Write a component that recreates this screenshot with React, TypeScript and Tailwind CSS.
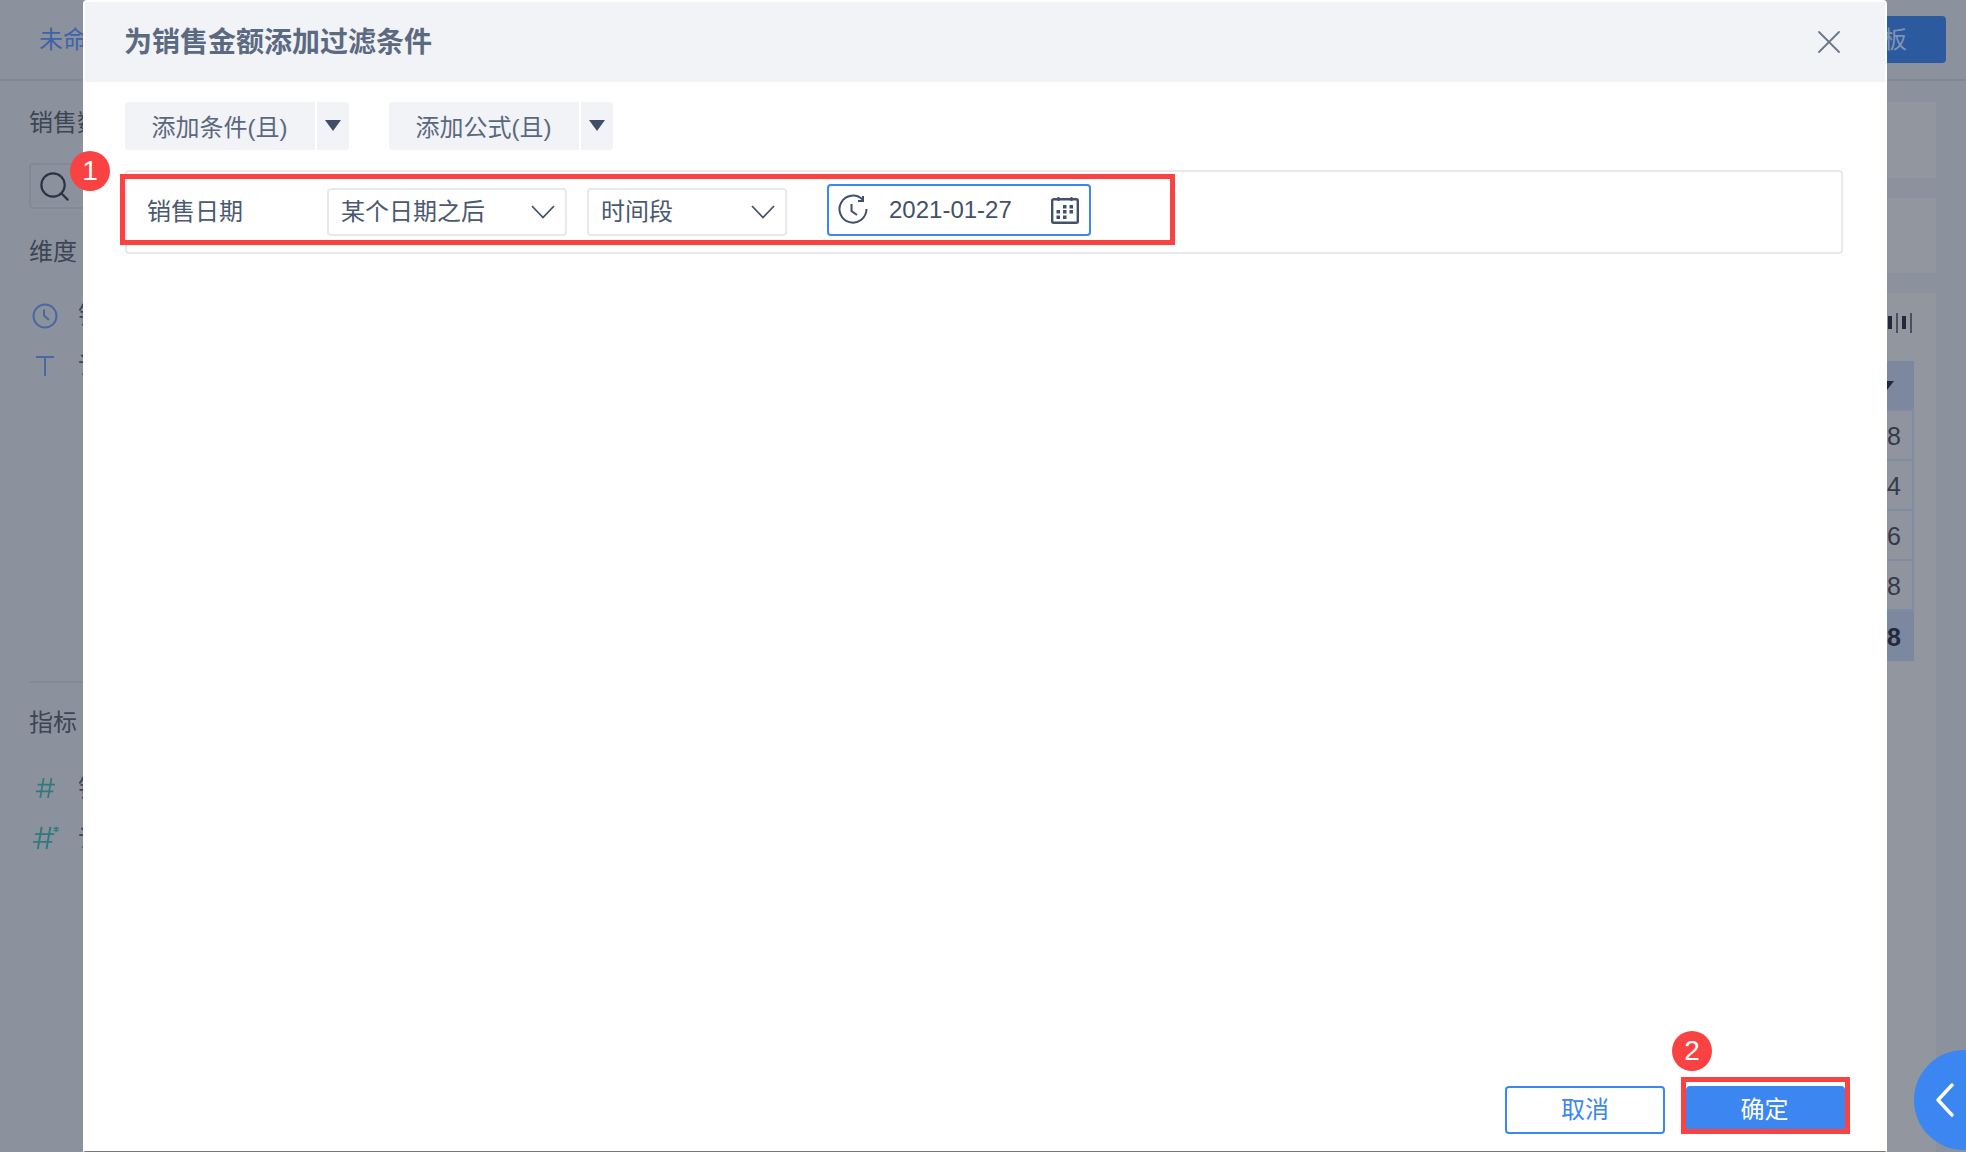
import { Search, X } from "lucide-react";

function HistoryIcon() {
  return (
    <svg width="30" height="30" viewBox="0 0 30 30" fill="none" stroke="#42506a" strokeWidth="2" className="-mt-[2px]">
      <path d="M28.5 15A13.5 13.5 0 1 1 24.5 5.5" />
      <path d="M25 2V7H20" />
      <path d="M13.5 10V17L19 21" />
    </svg>
  );
}

function CalendarIcon() {
  return (
    <svg width="28" height="28" viewBox="0 0 28 28" fill="#42506a">
      <rect x="1.2" y="3.2" width="25.6" height="23.6" rx="1.5" fill="none" stroke="#42506a" strokeWidth="2.4" />
      <path d="M6.5 1H8.5V5H6.5ZM19.5 1H21.5V5H19.5Z" />
      <path d="M12 9H15.5V12.5H12ZM18.5 9H22V12.5H18.5ZM5.5 14H9V17.5H5.5ZM12 14H15.5V17.5H12ZM18.5 14H22V17.5H18.5ZM5.5 19.5H9V23H5.5ZM12 19.5H15.5V23H12Z" />
    </svg>
  );
}

function Chevron() {
  return (
    <svg width="24" height="14" viewBox="0 0 24 14" fill="none" stroke="#42506a" strokeWidth="1.8">
      <path d="M1 1L12 12.5L23 1" />
    </svg>
  );
}

function Caret() {
  return <div className="h-0 w-0 border-x-[8px] border-t-[11px] border-x-transparent border-t-[#3f4d66]" />;
}

function AddButton({ label }: { label: string }) {
  return (
    <div className="flex gap-[2px]">
      <div className="flex h-12 w-[190px] items-center justify-center rounded-l bg-[#f1f3f7] pr-[1px] pt-[3px] text-[24px] text-[#5a687e]">
        {label}
      </div>
      <div className="flex h-12 w-8 items-center justify-center rounded-r bg-[#f1f3f7] pb-[2px]">
        <Caret />
      </div>
    </div>
  );
}

function SelectBox({ value, className }: { value: string; className: string }) {
  return (
    <div className={`flex h-12 items-center justify-between rounded border-2 border-[#e8e9ef] pl-3 pr-[10px] text-[24px] text-[#4a5870] ${className}`}>
      <span>{value}</span>
      <Chevron />
    </div>
  );
}

function Badge({ n, className }: { n: number; className: string }) {
  return (
    <div className={`absolute flex h-10 w-10 items-center justify-center rounded-full bg-[#fa4242] text-[28px] leading-none text-white ${className}`}>
      {n}
    </div>
  );
}

function SideRow({ icon, label }: { icon: React.ReactNode; label: string }) {
  return (
    <div className="flex h-[50px] items-center">
      <div className="mr-[17px] flex w-8 justify-center">{icon}</div>
      <span className="text-[24px] text-[#3d4555]">{label}</span>
    </div>
  );
}

function HashIcon({ star }: { star?: boolean }) {
  return (
    <svg width="30" height="26" viewBox="0 0 30 26" fill="none" stroke="#2f7a7c" strokeWidth="2" className={star ? "-mt-[3px] ml-[3px]" : "-mt-[2px] ml-[6px]"}>
      <path d="M10 1.5L6 24.5M19 1.5L15 24.5M3 9H23M1 17H21" />
      {star && <path d="M25 1V7M22.4 2.5L27.6 5.5M27.6 2.5L22.4 5.5" strokeWidth="1.4" />}
    </svg>
  );
}

export default function App() {
  const rows = ["8", "4", "6", "8"];

  return (
    <div className="relative h-[1152px] w-[1966px] overflow-hidden bg-[#8b929d] font-['Liberation_Sans','Noto_Sans_CJK_SC',sans-serif]">
      {/* page behind the mask */}
      <div className="flex h-[81px] items-center justify-between border-b-2 border-[#81889a] pl-[39px] pr-5">
        <span className="text-[24px] text-[#3f63a6]">未命名</span>
        <div className="flex h-[47px] w-[160px] items-center justify-end rounded bg-[#2c5a9e] pr-[39px] text-[24px] text-[#8193b3]">
          保存模板
        </div>
      </div>
      <div className="flex h-[1071px]">
        <div className="w-[300px] pl-[29px] pt-[26px] text-[#3d4555]">
          <div className="text-[24px] leading-8">销售数据</div>
          <div className="mt-[24px] flex h-[46px] items-center rounded border-2 border-[#828a98] pl-[6px]">
            <Search size={35} strokeWidth={1.5} color="#2b3445" />
          </div>
          <div className="mt-[27px] h-[445px]">
            <div className="text-[24px] leading-8">维度</div>
            <div className="mt-[23px]">
              <SideRow
                icon={
                  <svg width="26" height="26" viewBox="0 0 26 26" fill="none" stroke="#4a68a0" strokeWidth="2">
                    <circle cx="13" cy="13" r="11.5" />
                    <path d="M12 6.5V12.5L17 17" />
                  </svg>
                }
                label="销售日期"
              />
              <SideRow
                icon={
                  <svg width="20" height="22" viewBox="0 0 20 22" fill="none" stroke="#4a68a0" strokeWidth="2">
                    <path d="M1 2H19M10 2V21" />
                  </svg>
                }
                label="订单编号"
              />
            </div>
          </div>
          <div className="border-t-2 border-[#838a96] pt-[24px]">
            <div className="text-[24px] leading-8">指标</div>
            <div className="mt-[25px]">
              <SideRow icon={<HashIcon />} label="销售金额" />
              <SideRow icon={<HashIcon star />} label="订单数量" />
            </div>
          </div>
        </div>
        <div className="flex flex-1 flex-col gap-5 pr-[30px] pt-[21px]">
          <div className="h-[76px] bg-[#92969f]" />
          <div className="h-[75px] bg-[#92969f]" />
          <div className="flex-1 bg-[#92969f] pl-5 pr-[22px]">
            <div className="flex h-[68px] items-start justify-end gap-1 pr-[2px] pt-5">
              <div className="mt-[3px] h-[13px] w-1 bg-[#23293a]" />
              <div className="h-5 w-[2px] bg-[#4a5060]" />
              <div className="mt-[3px] h-[13px] w-1 bg-[#23293a]" />
              <div className="h-5 w-[2px] bg-[#4a5060]" />
            </div>
            <div className="bg-[#7f8ca3] pb-[2px]">
              <div className="flex h-[48px] items-center justify-end bg-[#7b88a0] pr-5">
                <div className="h-0 w-0 border-x-[7px] border-t-[9px] border-x-transparent border-t-[#23293a]" />
              </div>
              {rows.map((n, i) => (
                <div key={i} className="mr-[2px] mt-[2px] flex h-[48px] items-center justify-end bg-[#8f949f] pr-[11px] pt-[3px] text-[25px] text-[#333a4a]">
                  {n}
                </div>
              ))}
            </div>
            <div className="flex h-[50px] items-center justify-end bg-[#7b88a0] pr-[13px] pt-[3px] text-[25px] font-bold text-[#232a3a]">
              8
            </div>
          </div>
        </div>
      </div>

      {/* dialog */}
      <div className="absolute left-[83px] top-0 flex h-[1152px] w-[1804px] flex-col rounded-t border-x-2 border-t-2 border-b border-white border-b-[#777777] bg-white">
        <div className="flex h-[80px] shrink-0 items-center justify-between bg-[#f1f3f7] pl-[39px] pr-[36px] pt-[2px]">
          <span className="text-[28px] font-bold text-[#5b6a80]">为销售金额添加过滤条件</span>
          <X size={40} strokeWidth={1.1} color="#6b788c" className="-mt-[3px]" />
        </div>
        <div className="ml-10 mt-5 flex gap-10">
          <AddButton label="添加条件(且)" />
          <AddButton label="添加公式(且)" />
        </div>
        <div className="ml-10 mt-5 flex h-[84px] w-[1718px] items-end rounded border-2 border-[#e8e9ef] pb-4 pl-5">
          <span className="flex h-12 w-[180px] items-center text-[24px] text-[#4a5870]">销售日期</span>
          <SelectBox value="某个日期之后" className="w-[240px]" />
          <SelectBox value="时间段" className="ml-5 w-[200px]" />
          <div className="ml-10 flex h-[52px] w-[264px] items-center rounded border-2 border-[#3b86f0] pl-[9px] pr-[10px] text-[24px] text-[#42506a]">
            <HistoryIcon />
            <span className="ml-[21px] flex-1">2021-01-27</span>
            <CalendarIcon />
          </div>
        </div>
        <div className="mt-auto flex justify-end gap-[21px] pb-[17px] pr-10">
          <div className="flex h-12 w-40 items-center justify-center rounded border-2 border-[#3b86f0] text-[24px] text-[#3b86f0]">
            取消
          </div>
          <div className="flex h-12 w-[159px] items-center justify-center rounded bg-[#3b86f0] pr-[2px] text-[24px] text-white">
            确定
          </div>
        </div>

        {/* annotations */}
        <div className="absolute left-[35px] top-[172px] h-[71px] w-[1055px] border-[5px] border-[#fa4242]" />
        <div className="absolute left-[1596px] top-[1075px] h-[57px] w-[169px] border-[5px] border-[#fa4242]" />
        <Badge n={1} className="left-[-15px] top-[149px]" />
        <Badge n={2} className="left-[1587px] top-[1029px]" />
      </div>

      <div className="absolute left-[1914px] top-[1050px] flex h-[100px] w-[100px] items-center rounded-full bg-[#3b86f0] pl-[22px]">
        <svg width="18" height="34" viewBox="0 0 18 34" fill="none" stroke="#ffffff" strokeWidth="3.4" strokeLinecap="round" strokeLinejoin="round">
          <path d="M16 2L2 17L16 32" />
        </svg>
      </div>
    </div>
  );
}
